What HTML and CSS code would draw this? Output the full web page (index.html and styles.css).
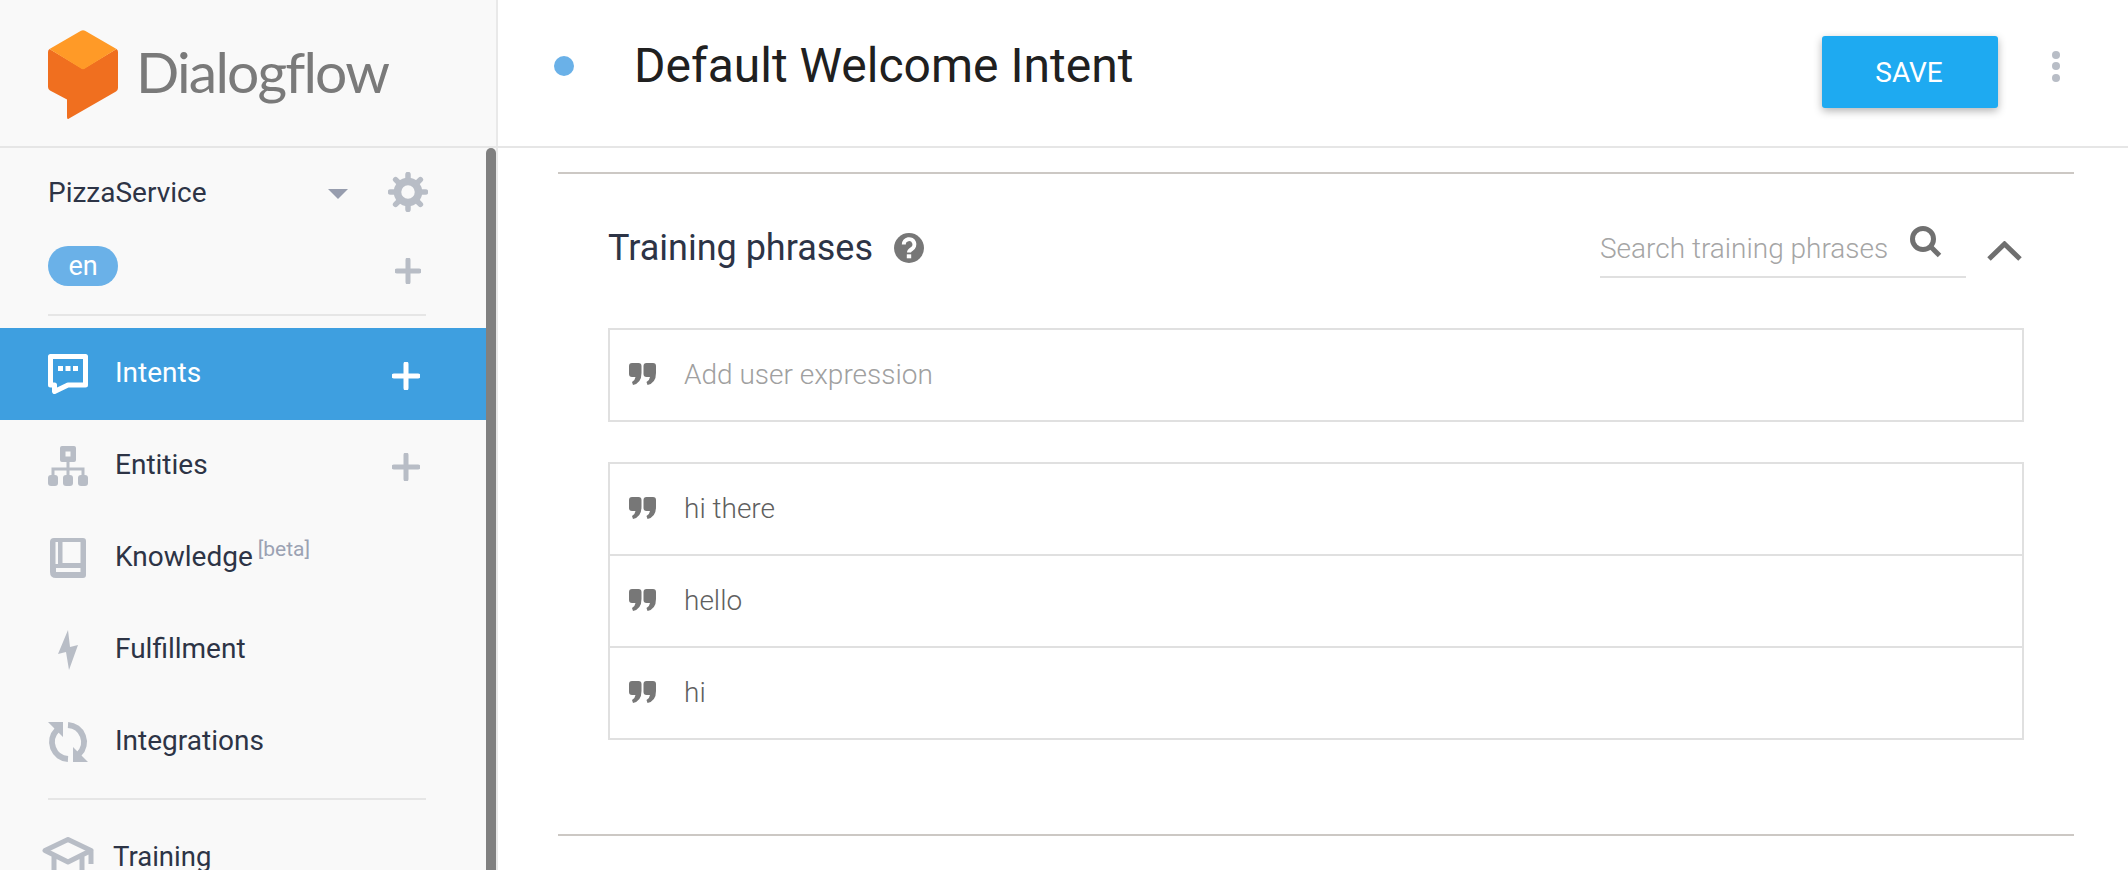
FILE: index.html
```html
<!DOCTYPE html>
<html lang="en">
<head>
<meta charset="utf-8">
<title>Dialogflow</title>
<link rel="stylesheet" href="styles.css">
</head>
<body>
<div class="app">
  <header class="topbar">
    <div class="brand">
      <svg class="logo-mark" viewBox="0 0 70 90" width="70" height="90">
        <path class="cube-body" d="M1.5 19 L35 39 L68.500 19 Q70 20 70 22 V58 Q70 60 68 61.500 L21 88.500 Q19 90 19 87 V69.500 L2 60.500 Q0 59 0 57 V22 Q0 20 1.500 19Z"/>
        <path class="cube-top" d="M33 .8 Q35 -.3 37 .8 L68.500 19 L37 38.500 Q35 40 33 38.500 L1.500 19Z"/>
      </svg>
      <span class="wordmark">Dialogflow</span>
    </div>
    <div class="titlebar">
      <span class="status-dot"></span>
      <h1 class="intent-title">Default Welcome Intent</h1>
      <button class="save-btn" type="button">SAVE</button>
      <div class="kebab"><i></i><i></i><i></i></div>
    </div>
  </header>
  <div class="workspace">
    <aside class="sidebar">
      <div class="project-row">
        <span class="project-name">PizzaService</span>
        <svg class="caret" viewBox="0 0 20 10" width="20" height="10"><path d="M0 0H20L10 10Z"/></svg>
        <svg class="gear" viewBox="0 0 40 40" width="40" height="40">
          <circle cx="20" cy="20" r="10.500" fill="none" stroke-width="7.500"/>
          <path d="M20 2.500V8M20 32V37.500M2.500 20H8M32 20H37.500M7.600 7.600L11.500 11.500M28.500 28.500L32.400 32.400M7.600 32.400L11.500 28.500M28.500 11.500L32.400 7.600" fill="none" stroke-width="5.500" stroke-linecap="round"/>
        </svg>
      </div>
      <div class="lang-row">
        <span class="lang-pill">en</span>
        <svg class="plus plus-lang" viewBox="0 0 26 26" width="26" height="26"><path d="M13 2V24M2 13H24"/></svg>
      </div>
      <div class="side-rule rule-top"></div>
      <nav class="nav">
        <a class="nav-row active">
          <svg class="nav-icon" viewBox="0 0 40 40" width="40" height="40">
            <path class="bubble" d="M2.500 2.500H37.500V31H20L6.500 37.500V31H2.500Z"/>
            <path class="bubble-dots" d="M10 12h5v5h-5zM17.500 12h5v5h-5zM25 12h5v5h-5z"/>
          </svg>
          <span class="nav-label">Intents</span>
          <svg class="plus" viewBox="0 0 28 28" width="28" height="28"><path d="M14 2V26M2 14H26"/></svg>
        </a>
        <a class="nav-row">
          <svg class="nav-icon" viewBox="0 0 40 40" width="40" height="40">
            <path d="M14 0H26Q28 0 28 2V14Q28 16 26 16H14Q12 16 12 14V2Q12 0 14 0ZM17.500 5.500V10.500H22.500V5.500Z" fill-rule="evenodd"/>
            <path d="M18.500 16H21.500V21.500H36.500V30H33.500V24.500H21.500V30H18.500V24.500H6.500V30H3.500V21.500H18.500Z"/>
            <rect x="0" y="29" width="10" height="11" rx="3"/><rect x="15" y="29" width="10" height="11" rx="3"/><rect x="30" y="29" width="10" height="11" rx="3"/>
          </svg>
          <span class="nav-label">Entities</span>
          <svg class="plus plus-entities" viewBox="0 0 28 28" width="28" height="28"><path d="M14 2V26M2 14H26"/></svg>
        </a>
        <a class="nav-row">
          <svg class="nav-icon" viewBox="-2 0 40 40" width="40" height="40">
            <path fill-rule="evenodd" d="M4 0H33Q36 0 36 3V37Q36 40 33 40H6Q0 40 0 34V4Q0 0 4 0ZM5.500 4V26H8V4ZM12.500 4V25H30.500V4ZM6 30V34H30.500V30Z"/>
          </svg>
          <span class="nav-label">Knowledge<sup class="beta">[beta]</sup></span>
        </a>
        <a class="nav-row">
          <svg class="nav-icon" viewBox="-10 0 40 40" width="40" height="40">
            <path d="M10 0L0 24L8 22L11 40L20 15L12 17Z"/>
          </svg>
          <span class="nav-label">Fulfillment</span>
        </a>
        <a class="nav-row">
          <svg class="nav-icon" viewBox="0 0 40 40" width="40" height="40">
            <path class="sync" d="M9 8A17 17 0 0 0 20 37M20 3A17 17 0 0 1 31 32"/>
            <path d="M0 0H15V15ZM40 40H25V25Z"/>
          </svg>
          <span class="nav-label">Integrations</span>
        </a>
      </nav>
      <div class="side-rule rule-bottom"></div>
      <a class="training-row">
        <svg class="cap-icon" viewBox="0 0 52 44" width="52" height="44">
          <path class="cap-line" d="M26 2.500L49 13.500L26 25L3 13.500ZM12 19V36H40V19M49 13.500V27"/>
        </svg>
        <span class="nav-label training-label">Training</span>
      </a>
      <div class="scrollbar"></div>
    </aside>
    <main class="content">
      <div class="section-rule"></div>
      <section class="phrases">
        <div class="phrases-head">
          <h2 class="phrases-title">Training phrases</h2>
          <svg class="help" viewBox="0 0 30 30" width="30" height="30">
            <circle cx="15" cy="15" r="15"/>
            <path class="help-q" d="M9.800 11.500A5.300 5.300 0 1 1 17.800 16C16 17.100 15 18 15 19.500"/>
            <rect class="help-dot" x="12.800" y="21.300" width="4.400" height="4"/>
          </svg>
          <div class="search">
            <span class="search-ph">Search training phrases</span>
            <svg class="search-icon" viewBox="0 0 32 32" width="32" height="32">
              <circle cx="13" cy="13" r="10.500"/>
              <path d="M20.500 20.500L29.500 29.500"/>
            </svg>
          </div>
          <svg class="chevron" viewBox="0 0 35 20" width="35" height="20"><path d="M2 18L17.500 3L33 18"/></svg>
        </div>
        <div class="box">
          <div class="phrase-row placeholder">
            <svg class="quote" viewBox="0 0 27 22" width="27" height="22"><path d="M0 3Q0 0 3 0H9.500Q12.500 0 12.500 3V10Q12.500 20 4 22L3 19Q6 17.500 6.500 14H3Q0 14 0 11ZM14.500 3Q14.500 0 17.500 0H24Q27 0 27 3V10Q27 20 18.500 22L17.500 19Q20.500 17.500 21 14H17.500Q14.500 14 14.500 11Z"/></svg>
            <span>Add user expression</span>
          </div>
        </div>
        <div class="box list">
          <div class="phrase-row">
            <svg class="quote" viewBox="0 0 27 22" width="27" height="22"><path d="M0 3Q0 0 3 0H9.500Q12.500 0 12.500 3V10Q12.500 20 4 22L3 19Q6 17.500 6.500 14H3Q0 14 0 11ZM14.500 3Q14.500 0 17.500 0H24Q27 0 27 3V10Q27 20 18.500 22L17.500 19Q20.500 17.500 21 14H17.500Q14.500 14 14.500 11Z"/></svg>
            <span>hi there</span>
          </div>
          <div class="phrase-row">
            <svg class="quote" viewBox="0 0 27 22" width="27" height="22"><path d="M0 3Q0 0 3 0H9.500Q12.500 0 12.500 3V10Q12.500 20 4 22L3 19Q6 17.500 6.500 14H3Q0 14 0 11ZM14.500 3Q14.500 0 17.500 0H24Q27 0 27 3V10Q27 20 18.500 22L17.500 19Q20.500 17.500 21 14H17.500Q14.500 14 14.500 11Z"/></svg>
            <span>hello</span>
          </div>
          <div class="phrase-row">
            <svg class="quote" viewBox="0 0 27 22" width="27" height="22"><path d="M0 3Q0 0 3 0H9.500Q12.500 0 12.500 3V10Q12.500 20 4 22L3 19Q6 17.500 6.500 14H3Q0 14 0 11ZM14.500 3Q14.500 0 17.500 0H24Q27 0 27 3V10Q27 20 18.500 22L17.500 19Q20.500 17.500 21 14H17.500Q14.500 14 14.500 11Z"/></svg>
            <span>hi</span>
          </div>
        </div>
      </section>
      <div class="section-rule rule-end"></div>
    </main>
  </div>
</div>
</body>
</html>
```
FILE: styles.css
```css
* { box-sizing: border-box; }
html, body { margin: 0; height: 100%; overflow: hidden; background: #fff; }
body { font-family: Roboto, "Liberation Sans", sans-serif; color: #2d3446; }
.app { display: flex; flex-direction: column; width: 2128px; height: 870px; overflow: hidden; }

/* top bar */
.topbar { display: flex; height: 148px; flex: none; border-bottom: 2px solid #e6e6e6; }
.brand { display: flex; align-items: flex-start; width: 498px; flex: none; padding: 30px 0 0 48px; background: #f9f9f9; border-right: 2px solid #e9e9e9; }
.logo-mark { flex: none; }
.cube-body { fill: #f06f1f; }
.cube-top { fill: #ff9a27; }
.wordmark { margin: 7px 0 0 18px; font-family: Lato, sans-serif; font-size: 57px; line-height: 68px; color: #7a7a7a; letter-spacing: -1.800px; }
.titlebar { display: flex; align-items: center; flex: 1; padding: 0 68px 0 56px; }
.status-dot { width: 20px; height: 20px; flex: none; margin-top: -14px; border-radius: 50%; background: #6ab1e8; }
.intent-title { margin: -14px 0 0 60px; font-size: 48px; font-weight: 400; line-height: 60px; color: #202020; }
.save-btn { display: block; width: 176px; height: 72px; margin: -2px 0 0 auto; padding: 0 2px 0 0; border: 0; border-radius: 3px; background: #1eaaf1; color: #fff; font: 400 28px Roboto, sans-serif; box-shadow: 0 3px 8px rgba(0, 0, 0, .3); }
.kebab { display: flex; flex-direction: column; gap: 3.500px; width: 8px; margin: -14px 0 0 54px; }
.kebab i { display: block; width: 8px; height: 8px; border-radius: 50%; background: #b8bdc6; }

/* sidebar */
.workspace { display: flex; flex: 1; min-height: 0; }
.sidebar { position: relative; width: 498px; flex: none; overflow: hidden; background: #f9f9f9; border-right: 2px solid #e9e9e9; }
.project-row { display: flex; align-items: center; height: 88px; padding: 0 68px 0 48px; }
.project-name { flex: 1; font-size: 28px; }
.caret { fill: #979dae; margin: 3px 40px 0 0; }
.gear { stroke: #b8bdc6; }
.lang-row { display: flex; align-items: flex-start; height: 60px; padding: 10px 75px 0 48px; }
.lang-pill { width: 70px; height: 40px; border-radius: 20px; background: #6ab1e8; color: #fff; font-size: 27px; line-height: 40px; text-align: center; }
.plus { flex: none; fill: none; stroke: #b8bdc6; stroke-width: 5; stroke-linecap: round; margin-left: auto; }
.plus-lang { margin-top: 12px; }
.side-rule { height: 2px; width: 378px; margin-left: 48px; background: #e6e6e6; }
.rule-top { margin-top: 18px; margin-bottom: 12px; }
.rule-bottom { margin-top: 10px; }
.nav { display: block; }
.nav-row { display: flex; align-items: center; width: 486px; height: 92px; padding: 0 66px 0 48px; }
.nav-row .plus { margin-top: 3px; }
.nav-row .plus-entities { margin-top: 2px; }
.nav-icon { flex: none; margin-right: 27px; fill: #b8bdc6; }
.nav-label { margin-top: -3px; font-size: 28px; line-height: 36px; color: #2d3446; white-space: nowrap; }
.beta { position: relative; top: 1px; margin-left: 5px; font-size: 21px; line-height: 0; color: #9ba2b3; }
.sync { fill: none; stroke: #b8bdc6; stroke-width: 6; }
.active { background: #3e9fe0; }
.active .nav-label { color: #fff; }
.active .plus { stroke: #fff; }
.bubble { fill: none; stroke: #fff; stroke-width: 5; stroke-linejoin: round; }
.bubble-dots { fill: #fff; }
.training-row { display: flex; align-items: flex-start; padding: 37px 0 0 42px; }
.cap-icon { flex: none; margin-right: 19px; }
.cap-line { fill: none; stroke: #b8bdc6; stroke-width: 5; stroke-linejoin: round; }
.training-label { margin-top: 2px; font-size: 27.500px; }
.scrollbar { position: absolute; top: 0; bottom: 0; left: 486px; width: 10px; border-radius: 5px 5px 0 0; background: #808080; }

/* content */
.content { flex: 1; min-width: 0; padding: 24px 54px 0 60px; }
.section-rule { height: 2px; background: #ccc8c4; }
.phrases { padding: 0 50px; height: 660px; }
.phrases-head { display: flex; align-items: flex-start; padding-top: 42px; margin-bottom: 50px; }
.phrases-title { margin: 2px 0 -2px; font-size: 36px; font-weight: 400; line-height: 60px; color: #2d3446; }
.help { flex: none; margin: 17px 0 0 21px; fill: #777; }
.help-q { fill: none; stroke: #fff; stroke-width: 4; }
.help-dot { fill: #fff; }
.search { display: flex; align-items: flex-start; justify-content: space-between; width: 366px; height: 62px; margin-left: auto; border-bottom: 2px solid #e0e0e0; }
.search-ph { font-size: 28px; font-weight: 300; line-height: 66px; color: #a5a5a5; }
.search-icon { margin: 10px 24px 0 0; fill: none; stroke: #707070; stroke-width: 5; }
.chevron { flex: none; margin: 25px 2px 0 21px; fill: none; stroke: #6f6f6f; stroke-width: 5; }
.box { border: 2px solid #e0e0e0; }
.list { margin-top: 40px; }
.phrase-row { display: flex; align-items: center; height: 90px; padding: 0 0 2px 19px; font-size: 28px; font-weight: 300; color: #5f5f5f; }
.phrase-row + .phrase-row { height: 92px; border-top: 2px solid #e0e0e0; }
.placeholder { color: #a0a0a0; }
.quote { flex: none; margin: 0 29px 0 0; fill: #777; }
.phrase-row span { margin-left: -1px; }
```
